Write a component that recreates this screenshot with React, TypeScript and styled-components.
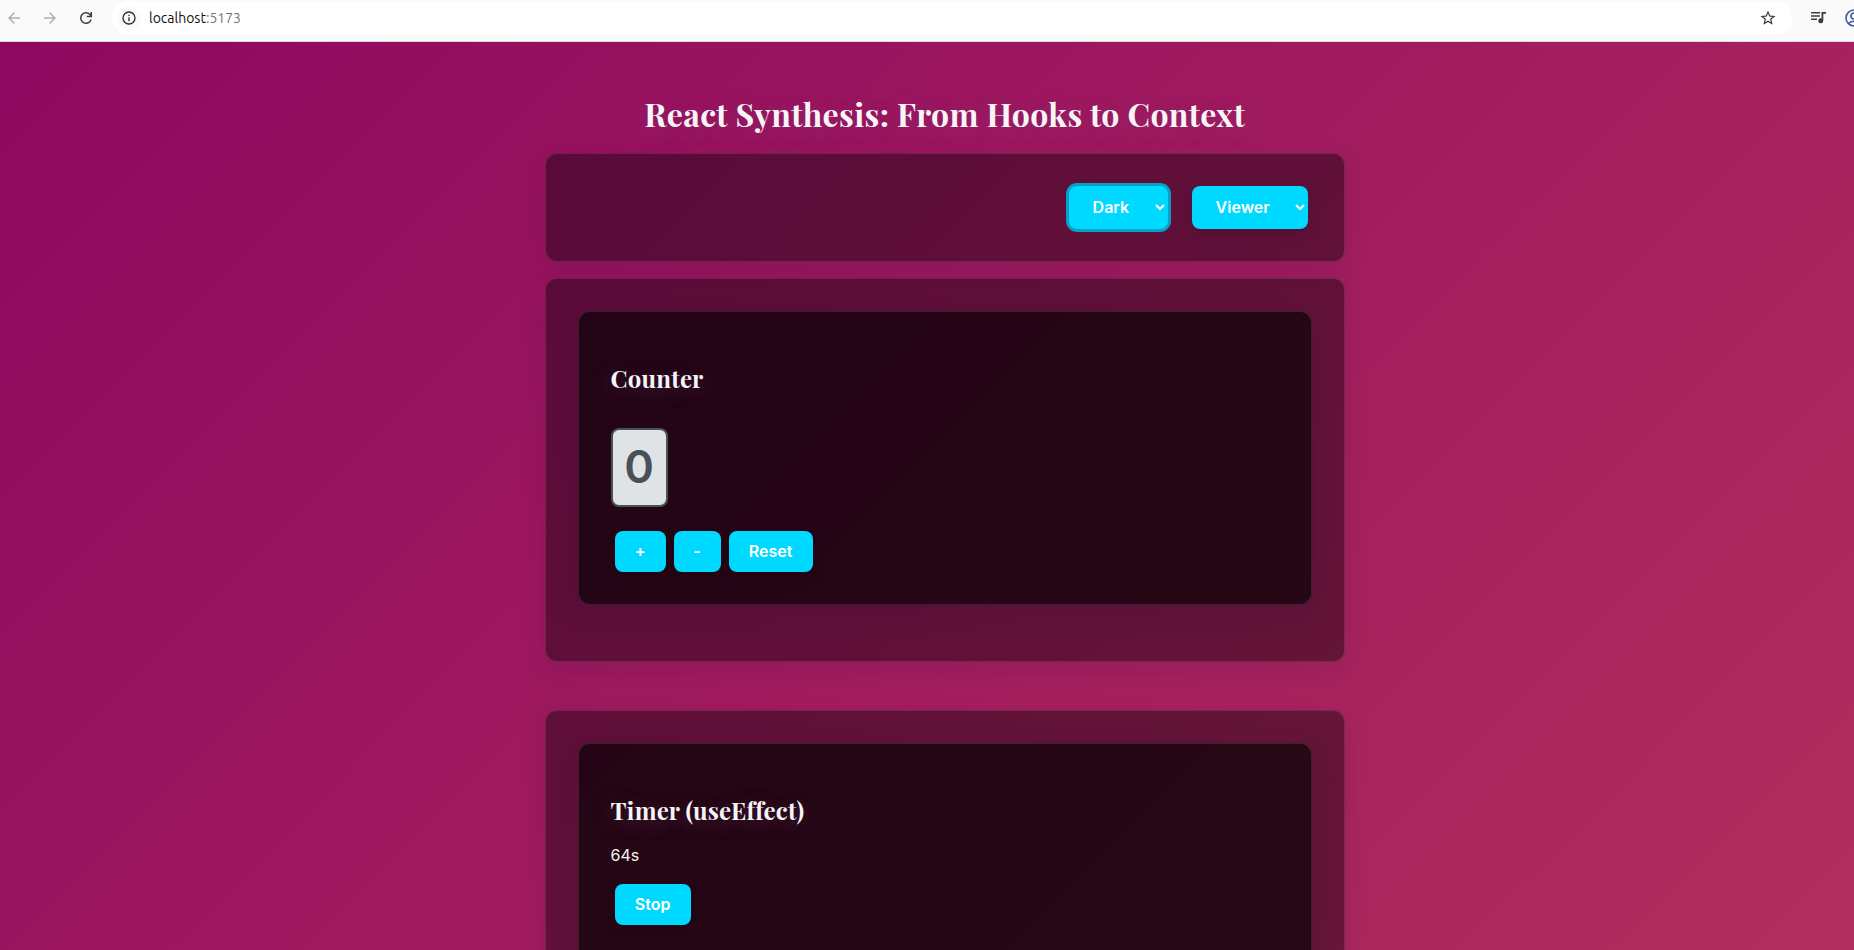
import React from "react";
import styled, { createGlobalStyle, css } from "styled-components";

const Global = createGlobalStyle`
  * { box-sizing: border-box; }
  html, body { margin: 0; padding: 0; }
  body { height: 950px; overflow: hidden; font-family: Inter, "Liberation Sans", sans-serif; font-size: 16px; color: #f5f5f5; }
`;

const Browser = styled.div`
  height: 950px;
  display: flex;
  flex-direction: column;
  overflow: hidden;
`;

const Toolbar = styled.header`
  flex: none;
  height: 42px;
  display: flex;
  align-items: flex-start;
  background: #fafafa;
  border-bottom: 1px solid #dcdcdf;
  overflow: hidden;
`;

const NavButton = styled.span<{ $muted?: boolean }>`
  width: 36px;
  height: 36px;
  flex: none;
  display: flex;
  align-items: center;
  justify-content: center;
  color: ${(p) => (p.$muted ? "#b0b0b0" : "#3c3c3c")};
  svg { display: block; width: 18px; height: 18px; }
`;

const NavGroup = styled.div`
  flex: none;
  width: 112px;
  display: flex;
  margin-left: -4px;
`;

const AddressBar = styled.div`
  flex: 1;
  height: 34px;
  margin-top: 1px;
  margin-left: 4px;
  border-radius: 17px;
  background: #fff;
  display: flex;
  align-items: center;
  padding: 0 15px 0 5px;
  color: #3c3c3c;
`;

const SiteInfo = styled.span`
  width: 24px;
  height: 24px;
  border-radius: 50%;
  background: #fafafa;
  display: flex;
  align-items: center;
  justify-content: center;
  color: #2c2c2c;
`;

const Address = styled.span`
  flex: 1;
  margin-left: 8px;
  font: 14px/20px Ubuntu, "Noto Sans", sans-serif;
  color: #111;
  span { color: #757575; }
`;

const ToolbarEnd = styled.div`
  flex: none;
  width: 62px;
  height: 36px;
  display: flex;
  align-items: center;
  color: #3c3c3c;
  padding-left: 17px;
  gap: 15px;
  overflow: hidden;
  svg { flex: none; }
`;

const Viewport = styled.main`
  flex: 1;
  overflow: hidden;
  background: linear-gradient(135deg, #8e0860 0%, #b22e5c 100%);
`;

const Column = styled.div`
  width: 799.6px;
  margin: 0 0 0 545px;
  padding-top: 51px;
`;

const Title = styled.h1`
  margin: 0;
  height: 60px;
  line-height: 41px;
  text-align: center;
  white-space: nowrap;
  font-family: "Playfair Display", "Liberation Serif", serif;
  font-size: 32px;
  letter-spacing: 0.01em;
  font-weight: 700;
  text-shadow: 0 4px 20px rgba(130, 80, 160, 0.3);
`;

const Glass = css`
  border: 1px solid rgba(255, 255, 255, 0.1);
  border-radius: 12px;
  box-shadow: 0 8px 24px rgba(31, 20, 75, 0.12);
`;

const Section = styled.section<{ $after: number }>`
  ${Glass}
  padding: 32px;
  background: rgba(0, 0, 0, 0.4);
  margin-bottom: ${(p) => p.$after}px;
`;

const Controls = styled.div`
  display: flex;
  justify-content: flex-end;
  gap: 16px;
  height: 43px;
`;

const Select = styled.select<{ $active?: boolean; $width: number }>`
  width: ${(p) => p.$width}px;
  height: 43px;
  margin: 0 4px;
  padding: 0 1px 2px 20px;
  border: 0;
  border-radius: 8px;
  background: #00d9ff;
  color: #fff;
  font: 600 16px/19px Inter, sans-serif;
  outline: none;
  box-shadow: ${(p) => (p.$active ? "0 0 0 3px #08a0c4" : "0 4px 12px rgba(0, 0, 0, 0.15)")};
`;

const Card = styled.div<{ $height: number }>`
  ${Glass}
  height: ${(p) => p.$height}px;
  padding: 50px 31px 32px 31.6px;
  margin-bottom: 24px;
  background: rgba(0, 0, 0, 0.61);
`;

const Heading = styled.h2`
  margin: 0 0 1px;
  line-height: 32px;
  font-family: "Playfair Display", "Liberation Serif", serif;
  font-size: 24px;
  letter-spacing: 0.01em;
  font-weight: 700;
  white-space: nowrap;
  text-shadow: 0 4px 20px rgba(150, 120, 170, 0.35);
`;

const Count = styled.div`
  width: 57px;
  height: 79px;
  margin-top: 33px;
  margin-bottom: 24px;
  padding-bottom: 2px;
  display: flex;
  align-items: center;
  justify-content: center;
  border: 2px solid #495057;
  border-radius: 8px;
  background: #dfe3e6;
  color: #495057;
  font-size: 45px;
  font-weight: 600;
`;

const Seconds = styled.p`
  margin: 0;
  padding: 16px 0 17px;
  line-height: 24px;
`;

const Spaced = styled.div`
  display: flow-root;
`;

const Actions = styled.div`
  display: flex;
`;

const Button = styled.button<{ $width: number }>`
  width: ${(p) => p.$width}px;
  height: 41px;
  margin: 0 4px;
  padding: 0;
  border: 0;
  border-radius: 8px;
  background: #00d9ff;
  color: #fff;
  font: 600 16px/19px Inter, sans-serif;
  box-shadow: 0 4px 12px rgba(0, 0, 0, 0.15);
`;

const Icon = ({ d, size = 20 }: { d: string; size?: number }) => (
  <svg width={size} height={size} viewBox="0 0 24 24" fill="currentColor"><path d={d} /></svg>
);

export default function App() {
  return (
    <Browser>
      <Global />
      <Toolbar>
        <NavGroup>
          <NavButton $muted><Icon d="M20 11H7.83l5.59-5.59L12 4l-8 8 8 8 1.41-1.41L7.83 13H20v-2z" /></NavButton>
          <NavButton $muted><Icon d="M12 4l-1.41 1.41L16.17 11H4v2h12.17l-5.58 5.59L12 20l8-8z" /></NavButton>
          <NavButton><Icon d="M12 20q-3.35 0-5.675-2.325T4 12t2.325-5.675T12 4q1.725 0 3.3.713T18 6.75V4h2v7h-7V9h4.2q-.8-1.4-2.188-2.2T12 6Q9.5 6 7.75 7.75T6 12t1.75 4.25T12 18q1.925 0 3.475-1.1T17.65 14h2.1q-.7 2.65-2.85 4.325T12 20Z" /></NavButton>
        </NavGroup>
        <AddressBar>
          <SiteInfo><Icon size={16} d="M11 7h2v2h-2zm0 4h2v6h-2zm1-9a10 10 0 1 0 0 20 10 10 0 0 0 0-20zm0 18a8 8 0 1 1 0-16 8 8 0 0 1 0 16z" /></SiteInfo>
          <Address>localhost<span>:5173</span></Address>
          <Icon size={18} d="M22 9.24l-7.19-.62L12 2 9.19 8.63 2 9.24l5.46 4.73L5.82 21 12 17.27 18.18 21l-1.63-7.03zM12 15.4l-3.76 2.27 1-4.28-3.32-2.88 4.38-.38L12 6.1l1.71 4.04 4.38.38-3.32 2.88 1 4.28z" />
        </AddressBar>
        <ToolbarEnd>
          <svg width="20" height="20" viewBox="0 0 20 20" fill="currentColor">
            <path d="M2 4h9v1.6H2zM2 7.2h9v1.6H2zM2 10.4h6V12H2zM12.5 4H17v1.8h-2.7v7a2.5 2.5 0 1 1-1.8-2.4z" />
          </svg>
          <svg width="20" height="20" viewBox="0 0 20 20" fill="none" stroke="#3f5ba0" strokeWidth="1.6">
            <circle cx="10" cy="10" r="8" /><circle cx="10" cy="8" r="3" /><path d="M4.5 15.5c3-3 8-3 11 0" />
          </svg>
        </ToolbarEnd>
      </Toolbar>
      <Viewport>
        <Column>
          <Title>React Synthesis: From Hooks to Context</Title>
          <Section $after={16}>
            <Controls>
              <Select $active $width={99} defaultValue="Dark"><option>Dark</option><option>Light</option></Select>
              <Select $width={116} defaultValue="Viewer"><option>Viewer</option><option>Admin</option></Select>
            </Controls>
          </Section>
          <Section $after={48}>
            <Card $height={294}>
              <Heading>Counter</Heading>
              <Spaced>
                <Count>0</Count>
              </Spaced>
              <Actions>
                <Button $width={51}>+</Button>
                <Button $width={47}>-</Button>
                <Button $width={84}>Reset</Button>
              </Actions>
            </Card>
          </Section>
          <Section $after={0}>
            <Card $height={294}>
              <Heading>Timer (useEffect)</Heading>
              <Seconds>64s</Seconds>
              <Actions><Button $width={76}>Stop</Button></Actions>
            </Card>
          </Section>
        </Column>
      </Viewport>
    </Browser>
  );
}
